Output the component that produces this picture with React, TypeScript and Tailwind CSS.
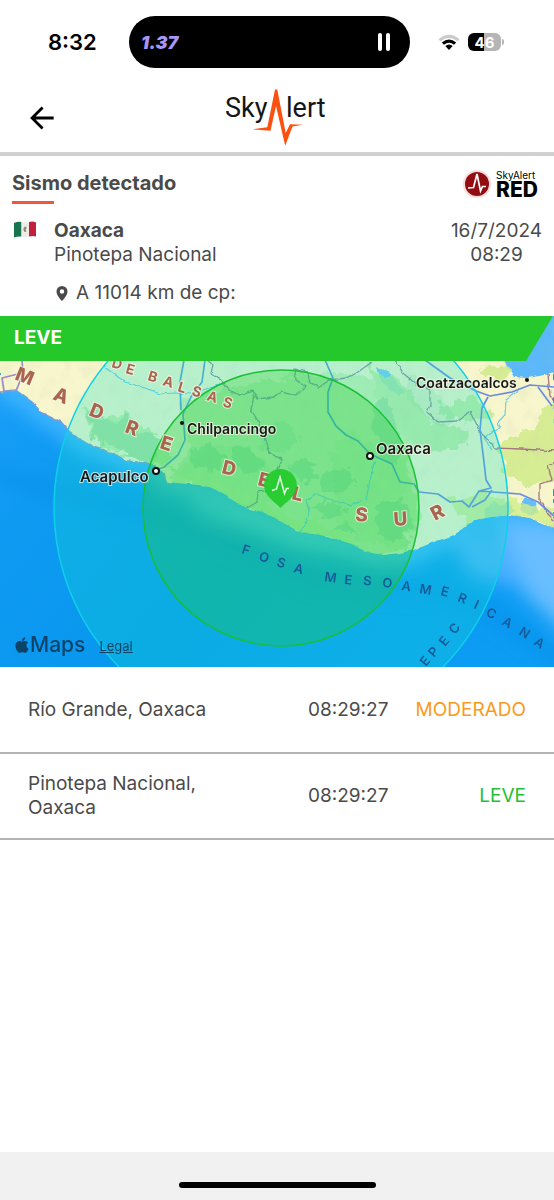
import React from "react";
import { FaApple } from "react-icons/fa";

type Glyph = [char: string, x: number, y: number, angle: number];

interface Reading {
  place: string;
  time: string;
  level: string;
  color: string;
}

const readings: Reading[] = [
  { place: "Río Grande, Oaxaca", time: "08:29:27", level: "MODERADO", color: "text-[#f99a1c]" },
  { place: "Pinotepa Nacional, Oaxaca", time: "08:29:27", level: "LEVE", color: "text-[#25be35]" },
];

const sierra: Glyph[][] = [
  [["M", 25, 376, 22], ["A", 61, 395, 22], ["D", 97, 411, 22], ["R", 133, 428, 20], ["E", 168, 444, 18]],
  [["D", 229, 468, 14], ["E", 265, 480, 14], ["L", 299, 494, 14]],
  [["S", 362, 514, 3], ["U", 400, 519, -4], ["R", 438, 512, -28]],
];

const balsas: Glyph[][] = [
  [["D", 117, 363, 15], ["E", 131, 369, 15]],
  [["B", 153, 377, 17], ["A", 168, 382, 17], ["L", 183, 388, 17], ["S", 197, 392, 17], ["A", 212, 397, 17], ["S", 228, 403, 17]],
];

const fosa: Glyph[][] = [
  [["F", 247, 550, 18], ["O", 264, 557, 18], ["S", 282, 563, 16], ["A", 299, 569, 14]],
  [
    ["M", 330, 577, 8], ["E", 349, 580, 5], ["S", 368, 581, 3], ["O", 387, 583, 5], ["A", 406, 586, 8], ["M", 426, 589, 9],
    ["E", 446, 592, 14], ["R", 463, 598, 20], ["I", 477, 604, 24], ["C", 491, 613, 28], ["A", 507, 622, 30], ["N", 524, 632, 32], ["A", 540, 643, 33],
  ],
  [["E", 425, 660, -50], ["P", 434, 651, -48], ["E", 444, 640, -50], ["C", 454, 628, -52]],
];

// Places each letter by its centre; x/y/rotate lists keep each word one text node.
function CurvedLabel({ words, size, className }: { words: Glyph[][]; size: number; className: string }) {
  const h = size * 0.365;
  return (
    <g fontSize={size} className={className}>
      {words.map((glyphs) => {
        const points = glyphs.map(([char, x, y, angle]) => {
          const w = (char === "M" ? 0.45 : char === "I" ? 0.14 : 0.36) * size;
          const r = (angle * Math.PI) / 180;
          return [
            Math.round(x - w * Math.cos(r) - h * Math.sin(r)),
            Math.round(y - w * Math.sin(r) + h * Math.cos(r)),
          ];
        });
        return (
          <text
            key={glyphs[0][1]}
            x={points.map((p) => p[0]).join(" ")}
            y={points.map((p) => p[1]).join(" ")}
            rotate={glyphs.map((g) => g[3]).join(" ")}
          >
            {glyphs.map((g) => g[0]).join("")}
          </text>
        );
      })}
    </g>
  );
}

const shore =
  "M0 392L17 391L32 402L42 413L62 423L70 432L78 438L93 447L113 453L127 461L147 463L160 469L167 482";
const coast =
  shore +
  "L200 485L210 487L223 493L237 503L247 508L263 512L282 522L300 532L327 536L349 543L367 552L384 555L400 553L414 550L434 542L454 535L474 520L490 517L510 515L530 518L554 528";

const halo = "[paint-order:stroke] stroke-[#f7f5e4]/75 stroke-2";

function QuakeMap() {
  return (
    <svg viewBox="0 316 554 351" className="block w-full font-[Inter,sans-serif]" role="img" aria-label="Mapa del sismo">
      <defs>
        <linearGradient id="sea" x1="0" y1="0" x2="1" y2="0.5">
          <stop offset="0" stopColor="#1ea0fb" />
          <stop offset="0.25" stopColor="#0f9af2" />
          <stop offset="0.6" stopColor="#0797ee" />
          <stop offset="1" stopColor="#0c9cf4" />
        </linearGradient>
        <filter id="soft" x="-20%" y="-20%" width="140%" height="140%">
          <feGaussianBlur stdDeviation="9" />
        </filter>
        <filter id="rough" x="-5%" y="-5%" width="110%" height="110%">
          <feTurbulence type="fractalNoise" baseFrequency="0.09" numOctaves="3" seed="4" result="n" />
          <feDisplacementMap in="SourceGraphic" in2="n" scale="17" xChannelSelector="R" yChannelSelector="G" />
        </filter>
        <filter id="fine" x="-5%" y="-5%" width="110%" height="110%">
          <feTurbulence type="fractalNoise" baseFrequency="0.14" numOctaves="2" seed="8" result="n" />
          <feDisplacementMap in="SourceGraphic" in2="n" scale="4" xChannelSelector="R" yChannelSelector="G" />
        </filter>
        <filter id="relief" x="0" y="0" width="100%" height="100%">
          <feTurbulence type="fractalNoise" baseFrequency="0.07 0.05" numOctaves="4" seed="2" />
          <feColorMatrix values="0 0 0 0 0.45  0 0 0 0 0.6  0 0 0 0 0.4  0.9 0 0 0 -0.4" />
        </filter>
        <clipPath id="land">
          <path d={coast + "V316H0Z"} />
        </clipPath>
      </defs>

      <rect y="316" width="554" height="351" fill="url(#sea)" />
      <g filter="url(#soft)" fill="none">
        <path d={coast} stroke="#3fb6ff" strokeWidth="22" />
        <path d="M-20 470L90 500L200 530L330 585L430 590L500 618L580 670" stroke="#0a86e0" strokeWidth="14" opacity="0.4" />
        <path d="M500 525L575 525V640L520 590Z" fill="#68beff" />
        <path d="M450 540L500 530L530 590L470 575Z" fill="#48b0ff" />
        <path d="M180 490L290 528L390 556L440 550L400 565L300 550L200 515Z" fill="#63d3ff" opacity="0.6" />
      </g>

      <g filter="url(#fine)">
        <path d={coast + "V300H0Z"} fill="#f8f6cc" />
        <path d="M498 350L506 364L514 377L527 378L540 376L560 372V300H498Z" fill="#5bb8fa" />
        <path d="M376 366l14 6 8 12 6 8-4 4-12-8-10-12z" fill="#62befb" opacity="0.8" />
        <path d="M484 518l2-10 8-6 7 4 8-5 6 10-8 4z M520 510l4-12 10 2 4 12-8 4z" fill="#62befb" />
      </g>

      <g clipPath="url(#land)">
        <g filter="url(#rough)" fill="#bdec98" opacity="0.8">
          <path d="M80 405L100 418L120 414L150 428L172 452L162 466L140 460L110 452L92 436Z" />
          <path d="M180 400L260 380L330 372L400 380L420 420L408 470L420 520L380 560L300 530L240 500L170 480L190 450Z" opacity="0.75" />
          <path d="M210 445L250 448L275 470L300 490L260 505L215 492L180 470Z" />
          <path d="M330 450L352 430L380 448L410 460L402 500L410 548L360 542L340 520Z" />
          <path d="M370 365L410 390L430 420L470 430L466 445L430 452L402 436L380 410Z" />
          <path d="M438 404L475 398L492 414L470 422L440 418Z" />
          <path d="M500 440L530 428L560 425V480L520 486L504 470Z" fill="#cfeb86" />
          <path d="M480 364L510 370L500 384L490 376Z" fill="#cfeb86" />
          <path d="M540 410L570 400V440L535 438Z" fill="#cfeb86" />
          <path d="M445 500L480 494L520 500L554 510V530L500 520L470 525Z" fill="#d3ef8a" />
          <path d="M162 466L200 474L240 492L290 515L350 535L350 550L280 530L200 490Z" fill="#c0ee90" />
        </g>
        <g filter="url(#rough)" fill="#86d48c" opacity="0.5">
          <path d="M85 412l14-4 10 14 16-4 14 12 20 8 4 14-14 10-20-4-14-12-18-4z" />
          <path d="M192 450l18-8 14 14-10 16-20-4zM232 448l22 4 10 18-18 4-14-12z" />
          <path d="M255 432l28-12 16 20-10 14-26-4z" opacity="0.6" />
          <path d="M372 406l14-8 10 24 8 30-12 16-12-20-10-22z" />
          <path d="M318 478l24-12 16 14-12 14-24-2zM380 504l24-6 8 22-10 24-24-8-4-16z" />
          <path d="M310 508l20-8 16 10-14 10zM330 530l16-8 12 12z" />
          <path d="M410 372l24 18 22 26-12 12-24-16-18-22z" opacity="0.4" />
          <path d="M284 468l20-10 16 14-12 12z" />
        </g>
        <rect y="316" width="554" height="250" filter="url(#relief)" opacity="0.35" />
        <g filter="url(#fine)" fill="none" stroke="#6ccbe8" strokeWidth="1.2">
          <path d="M103 366L125 382L145 388L160 394L175 393L192 394L210 388L226 383" />
          <path d="M519 390L506 400L505 415L498 422L500 428L490 434L484 438L492 450" />
          <path d="M375 460L370 480L366 500M300 532L310 515L306 500L316 494L334 501L350 505L362 500" />
        </g>
        <g filter="url(#fine)" fill="none" stroke="#87909a" strokeWidth="1.3">
          <path d="M207 360L213 365L211 373L221 380L229 390L240 395L254 391L257 399L273 397L282 392L296 396L306 386L295 380L294 369L308 372L309 380L318 388L330 380L346 378L358 372L372 362" />
          <path d="M254 395L251 410L260 424L265 440L270 452L282 460L278 470L280 488L258 492L257 502L247 508" />
          <path d="M394 360L404 374L416 384L430 390L430 405L427 412L438 422L456 421L470 412L474 420L480 432L492 444L494 448" />
          <path d="M494 448L520 449L560 451M554 462L548 466L552 480L540 484L540 500L548 514L554 520M548 374L550 396L556 402" stroke="#a67583" />
        </g>
      </g>

      <g fill="none" stroke="#6c8ce2" strokeWidth="1.7" strokeLinejoin="round">
        <path d="M22 360L23 374L16 391L4 391L2 378L18 374" stroke="#9c88cc" />
        <path d={shore} stroke="#789ed4" strokeWidth="1.4" filter="url(#fine)" />
        <path d="M205 360L202 382L191 397L183 414L185 440L178 455L164 467L156 470M184 360L180 382L181 410" stroke="#5a9cd0" />
        <path d="M325 360L333 378L328 392L328 412L336 426L346 435L358 441L370 454L392 464L400 482L414 484L419 492" stroke="#4f9bca" />
        <path d="M419 492L438 494L450 502L462 501L469 507L479 491L520 494L538 502L554 516" />
        <path d="M425 360L450 378L476 391L490 396L512 392L530 385L554 387M488 397L482 408L480 430L484 462L486 480L491 488L479 491M538 387L552 406M472 507L485 500L492 490" />
      </g>

      <circle cx="281" cy="508" r="227" fill="#14e1cd" fillOpacity="0.28" stroke="#10cfe9" strokeWidth="1.5" />
      <circle cx="281" cy="508" r="138" fill="#22cc22" fillOpacity="0.28" stroke="#1abf35" strokeWidth="1.5" />

      <CurvedLabel words={sierra} size={19} className={`fill-[#a9654f] font-extrabold ${halo}`} />
      <CurvedLabel words={balsas} size={14} className={`fill-[#a9654f] font-bold ${halo}`} />
      <CurvedLabel words={fosa} size={13} className="fill-[#165c98] font-semibold" />

      <g className={`fill-[#17191b] font-semibold ${halo}`}>
        <text x="187" y="434" fontSize="14">Chilpancingo</text>
        <text x="416" y="388" fontSize="14">Coatzacoalcos</text>
        <text x="80" y="482" fontSize="15">Acapulco</text>
        <text x="376" y="454" fontSize="15">Oaxaca</text>
      </g>
      <circle cx="182" cy="423" r="2" fill="#111" />
      <circle cx="527" cy="380" r="2" fill="#111" />
      <circle cx="156" cy="471" r="3" fill="#fff" stroke="#111" strokeWidth="2" />
      <circle cx="370" cy="456" r="3" fill="#fff" stroke="#111" strokeWidth="2" />

      <path d="M280.500 508C276 503 264 496 264 485.500A16.500 16.500 0 0 1 297 485.500C297 496 285 503 280.500 508Z" fill="#22cb2a" fillOpacity="0.92" />
      <path d="M272 490.500L276.500 489L280 477L284.500 493.500L286.500 488.500L289 488.500" fill="none" stroke="#e5ffe5" strokeWidth="1.500" strokeLinejoin="miter" />
    </svg>
  );
}

function StatusBar() {
  return (
    <div className="flex h-[68px] items-end text-black">
      <div className="flex h-[52px] w-[129px] shrink-0 items-center pl-12 text-[22px] font-semibold">8:32</div>
      <div className="flex h-[52px] flex-1 items-center justify-between rounded-full bg-black pr-5 pl-3">
        <span className="text-[18px] font-black text-[#a896f7] italic">1.37</span>
        <button type="button" aria-label="Pausar" className="flex gap-1">
          <span className="h-[18px] w-1 rounded-sm bg-white" />
          <span className="h-[18px] w-1 rounded-sm bg-white" />
        </button>
      </div>
      <div className="flex h-[52px] w-[144px] shrink-0 items-center gap-2 pl-7">
        <svg viewBox="0 0 22 17" className="h-[17px] w-[22px]" aria-hidden="true">
          <path d="M0.500 5.200Q11-3.500 21.500 5.200L19.500 7.300Q11 0.500 2.500 7.300Z" fill="#cbcbcb" />
          <path d="M3.800 8.500Q11 2.500 18.200 8.500L16 10.700Q11 6.700 6 10.700Z" fill="#000" />
          <path d="M7.300 12Q11 9 14.700 12L11 16Z" fill="#000" />
        </svg>
        <div className="flex items-center gap-px">
          <span className="flex h-[18px] w-[33px] items-center justify-center rounded-md bg-linear-to-r from-black from-47% to-[#b5b5b5] to-47% text-[15px] leading-none font-bold text-white">
            46
          </span>
          <span className="h-1.5 w-0.5 rounded-r-full bg-[#b5b5b5]" />
        </div>
      </div>
    </div>
  );
}

function Header() {
  return (
    <header className="grid h-[88px] grid-cols-[1fr_auto_1fr] items-center border-b-4 border-[#d1d1d1]">
      <button type="button" aria-label="Volver" className="ml-7 flex h-7 w-7 items-center justify-center pt-4">
        <svg viewBox="0 0 24 24" className="h-7 w-7 shrink-0" fill="none" stroke="#000" strokeWidth="2.400">
          <path d="M22 12H3M12.500 3L3.500 12L12.500 21" />
        </svg>
      </button>
      <svg viewBox="224 86 106 62" className="mt-4 h-[62px] w-[106px]" role="img" aria-label="SkyAlert">
        <g className="fill-[#161616] font-[Roboto,sans-serif]" fontSize="27">
          <text x="225" y="116">Sky</text>
          <text x="286" y="116">lert</text>
        </g>
        <path
          d="M252.500 128.300L267.300 126.300L275 88.500H277.300L285.700 132L290 123.300L303 123.800L292.500 125.500L285.200 144.700L276 105L270.500 129.800Z"
          fill="#fb5010"
        />
      </svg>
      <span />
    </header>
  );
}

function Flag() {
  return (
    <svg viewBox="0 0 24 17" className="h-[17px] w-6" role="img" aria-label="México">
      <path d="M1 2Q5 0 8.500 1V15.500Q5 15 1 16.500Z" fill="#16754d" />
      <path d="M8.500 1Q12 2 16 1V15.500Q12 16.500 8.500 15.500Z" fill="#ecece8" />
      <path d="M16 1Q20 0 23 1.500V15.500Q20 14.500 16 15.500Z" fill="#c2203c" />
      <path d="M10.500 9Q10 6 12.500 5.500L14 7L12.500 8L13.500 10.500L11.500 11Z" fill="#a08066" />
    </svg>
  );
}

function RedBadge() {
  return (
    <div className="flex items-center gap-1 pr-1">
      <svg viewBox="0 0 30 30" className="h-[30px] w-[30px]" aria-hidden="true">
        <circle cx="15" cy="15" r="14" fill="#fbdcdc" />
        <circle cx="15" cy="15" r="12" fill="#920d12" />
        <path d="M6 19L11.500 18.500L15 5L18.500 22L20.500 17.500H24" fill="none" stroke="#fff" strokeWidth="1.700" />
      </svg>
      <div className="flex flex-col text-black">
        <span className="text-[10px] leading-3">SkyAlert</span>
        <span className="text-[21px] leading-[18px] font-extrabold">RED</span>
      </div>
    </div>
  );
}

export default function App() {
  return (
    <div className="flex min-h-screen flex-col bg-white font-[Inter,sans-serif] text-[#4a4a4a]">
      <StatusBar />
      <Header />
      <main className="flex-1">
        <section className="h-40 px-3 pt-[13px]">
          <div className="flex h-[50px] items-start justify-between">
            <div>
              <h1 className="text-[20px] leading-7 font-bold">Sismo detectado</h1>
              <div className="mt-1 h-[3px] w-[42px] bg-[#f2563a]" />
            </div>
            <RedBadge />
          </div>
          <div className="flex text-[19px] leading-6">
            <div className="w-[42px] shrink-0 pt-0.5 pl-px">
              <Flag />
            </div>
            <div className="flex-1">
              <p className="font-bold">Oaxaca</p>
              <p>Pinotepa Nacional</p>
              <p className="mt-3.5 flex items-center gap-2 pl-0.5">
                <svg viewBox="0 0 12 15" className="h-[15px] w-3" aria-hidden="true">
                  <path d="M6 0A5.500 5.500 0 0 0 0.500 5.500C0.500 9 4 13 6 15C8 13 11.500 9 11.500 5.500A5.500 5.500 0 0 0 6 0ZM6 3.300A2.200 2.200 0 1 1 6 7.700A2.200 2.200 0 0 1 6 3.300Z" fill="#4a4a4a" />
                </svg>
                A 11014 km de cp:
              </p>
            </div>
            <div className="text-center">
              <p>16/7/2024</p>
              <p>08:29</p>
            </div>
          </div>
        </section>

        <section className="relative">
          <QuakeMap />
          <h2 className="absolute inset-x-0 top-0 flex h-[45px] items-center bg-[#24c82a] pl-3.5 text-[19px] font-bold text-white [clip-path:polygon(0_0,calc(100%-1px)_0,calc(100%-28px)_100%,0_100%)]">
            LEVE
          </h2>
          <div className="absolute bottom-2 left-3.5 flex items-center gap-3.5 text-[#0b4468]">
            <span className="flex items-center text-[21px] leading-7 font-medium">
              <FaApple className="h-[18px] w-4" aria-hidden="true" />
              Maps
            </span>
            <a href="#legal" className="pt-1 text-[13px] underline">
              Legal
            </a>
          </div>
        </section>

        <table className="w-full border-collapse text-[19px] leading-6">
          <tbody>
            {readings.map((r) => (
              <tr key={r.place} className="h-[86px] border-b-2 border-[#b4b4b4]">
                <td className="w-[308px] pr-[90px] pl-7">{r.place}</td>
                <td className="whitespace-nowrap">{r.time}</td>
                <td className={`pr-7 text-right whitespace-nowrap ${r.color}`}>{r.level}</td>
              </tr>
            ))}
          </tbody>
        </table>
      </main>
      <footer className="flex h-12 items-end justify-center bg-[#f1f1f1] pb-3">
        <div className="h-1.5 w-[197px] rounded-full bg-black" />
      </footer>
    </div>
  );
}
